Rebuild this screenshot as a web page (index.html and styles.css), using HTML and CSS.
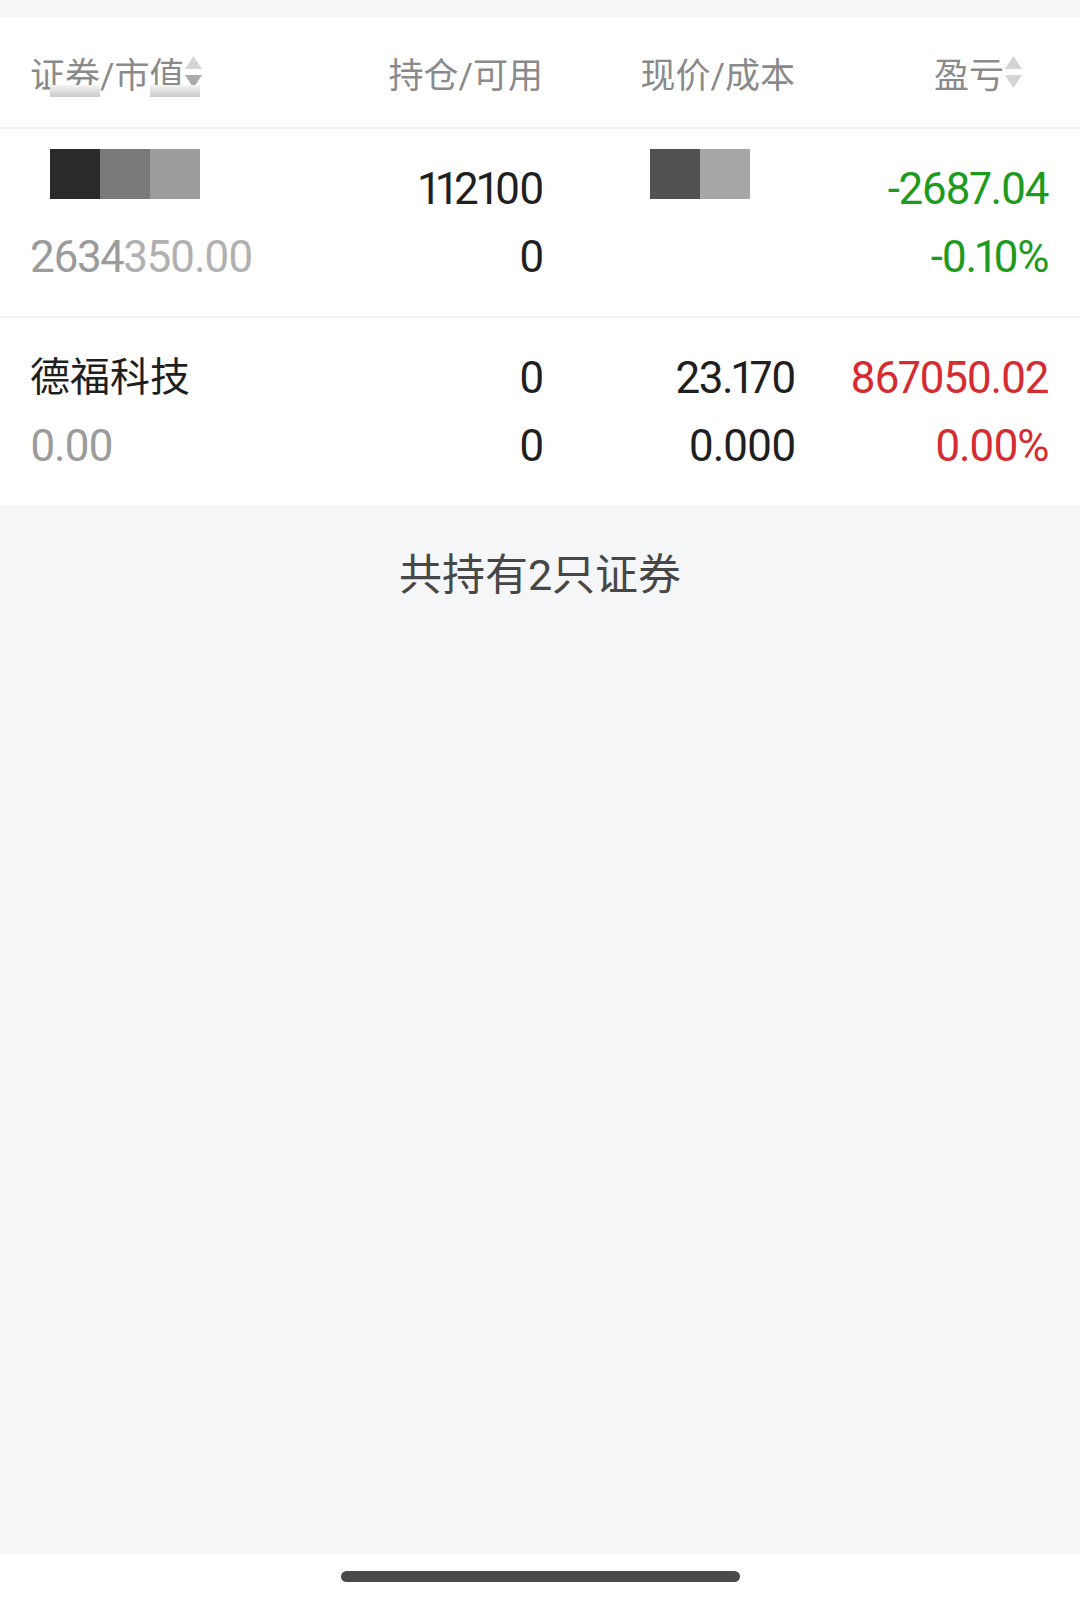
FILE: index.html
```
<!DOCTYPE html>
<html lang="zh-CN">
<head>
    <meta charset="UTF-8">
    <meta name="viewport" content="width=device-width, initial-scale=1.0">
    <title>持仓</title>
    <link rel="stylesheet" href="styles.css">
</head>
<body>
    <div id="page">
        <div class="top-band"></div>
        <div class="card">
            <div class="grid head">
                <div class="cell first">
                    <span>证券/市值</span>
                    <svg class="sort" viewBox="0 0 17 32"><path class="up" d="M0 13 L8.5 0 L17 13 Z"/><path class="down dark" d="M0 19 L17 19 L8.5 32 Z"/></svg>
                    <span class="smear s1"></span>
                    <span class="smear s2"></span>
                </div>
                <div class="cell">持仓/可用</div>
                <div class="cell">现价/成本</div>
                <div class="cell last">
                    <span>盈亏</span>
                    <svg class="sort" viewBox="0 0 17 32"><path class="up" d="M0 13 L8.5 0 L17 13 Z"/><path class="down" d="M0 19 L17 19 L8.5 32 Z"/></svg>
                </div>
            </div>

            <div class="grid item">
                <div class="cell first">
                    <div class="line slot">
                        <div class="mosaic m-left">
                            <i style="background:#2a2a2a"></i><i style="background:#7a7a7a"></i><i style="background:#9c9c9c"></i>
                        </div>
                    </div>
                    <div class="line muted">2634<span class="fade">350.00</span></div>
                </div>
                <div class="cell">
                    <div class="line">112100</div>
                    <div class="line">0</div>
                </div>
                <div class="cell">
                    <div class="line slot right">
                        <div class="mosaic m-right">
                            <i style="background:#515151"></i><i style="background:#a6a6a6"></i>
                        </div>
                    </div>
                    <div class="line"></div>
                </div>
                <div class="cell">
                    <div class="line down-c">-2687.04</div>
                    <div class="line down-c">-0.10%</div>
                </div>
            </div>

            <div class="grid item">
                <div class="cell first">
                    <div class="line name">德福科技</div>
                    <div class="line muted">0.00</div>
                </div>
                <div class="cell">
                    <div class="line">0</div>
                    <div class="line">0</div>
                </div>
                <div class="cell">
                    <div class="line">23.170</div>
                    <div class="line">0.000</div>
                </div>
                <div class="cell">
                    <div class="line up-c">867050.02</div>
                    <div class="line up-c">0.00%</div>
                </div>
            </div>
        </div>

        <div class="summary">共持有2只证券</div>
        <div class="spacer"></div>
        <div class="home-bar"><span></span></div>
    </div>
</body>
</html>
```

FILE: styles.css
```
body {
    margin: 0;
    padding: 0;
    background-color: #f5f6f8;
    font-family: Roboto, "Noto Sans CJK SC", sans-serif;
    color: #1f1f1f;
}

#page {
    display: flex;
    flex-direction: column;
    min-height: 1598px;
}

.top-band {
    height: 17px;
}

.card {
    background-color: #fff;
}

.grid {
    display: grid;
    grid-template-columns: 1fr 260px 252px 253px;
    padding: 0 32px 0 30px;
}

.cell {
    text-align: right;
}

.cell.first {
    text-align: left;
}

/* header */
.head {
    height: 110px;
    align-items: center;
    font-size: 35px;
    color: #8a8a8a;
}

.head .cell {
    display: flex;
    align-items: center;
    justify-content: flex-end;
    height: 100%;
}

.head .cell.first {
    justify-content: flex-start;
    position: relative;
}

.head .cell.last {
    padding-right: 26px;
}

.sort {
    width: 17px;
    height: 32px;
    margin-left: 1px;
}

.sort path {
    fill: #d4d4d4;
}

.sort path.dark {
    fill: #ababab;
}

.smear {
    position: absolute;
    top: 68px;
    width: 50px;
    height: 12px;
    background: linear-gradient(#f4f4f4, #c9c9c9);
}

.s1 { left: 20px; }
.s2 { left: 120px; }

/* rows */
.item {
    padding-top: 26px;
    padding-bottom: 25px;
    border-top: 2px solid #f1f1f1;
}

.line {
    height: 68px;
    line-height: 68px;
    font-size: 44px;
    letter-spacing: -1.5px;
    font-variant-numeric: proportional-nums;
    white-space: nowrap;
}

.line.slot {
    display: flex;
    align-items: flex-start;
}

.line.slot.right {
    justify-content: flex-end;
}

.line.name {
    font-size: 40px;
    letter-spacing: 0;
}

.muted {
    color: #9b9b9b;
}

.fade {
    color: #b0b0b0;
}

.down-c {
    color: #1e9a1e;
}

.up-c {
    color: #d62b31;
}

.mosaic {
    display: flex;
    margin-top: -6px;
}

.mosaic i {
    width: 50px;
    height: 50px;
}

.m-left {
    margin-left: 20px;
}

.m-right {
    margin-right: 45px;
}

.summary {
    text-align: center;
    font-size: 43px;
    color: #474747;
    padding-top: 41px;
    line-height: 58px;
}

.spacer {
    flex: 1;
}

.home-bar {
    height: 44px;
    background-color: #fff;
    display: flex;
    justify-content: center;
}

.home-bar span {
    width: 399px;
    height: 11px;
    margin-top: 17px;
    border-radius: 6px;
    background-color: #4a4a4a;
}
```
